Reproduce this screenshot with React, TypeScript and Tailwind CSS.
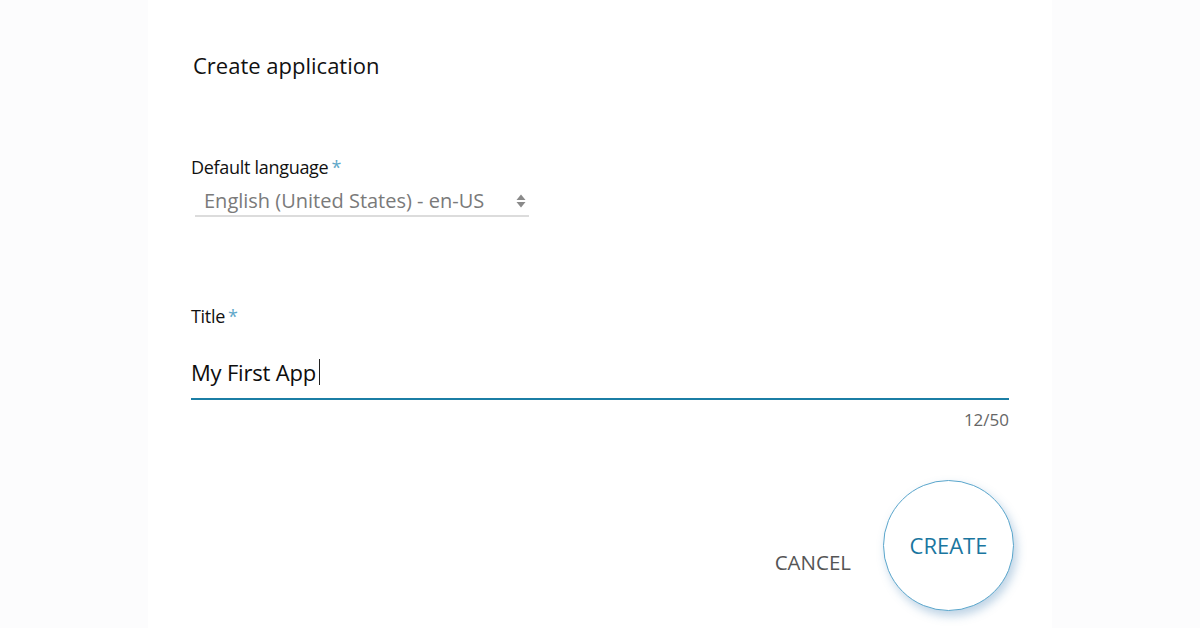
import React from "react";

const font = { fontFamily: '"Open Sans", "Noto Sans", Arial, sans-serif' };

function Asterisk() {
  return <span className="ml-[3px] text-[#5fa8c9]">*</span>;
}

export default function App() {
  return (
    <div className="flex h-[628px] w-[1200px] justify-center bg-[#fcfcfd]" style={font}>
      <div className="flex w-[904px] flex-col bg-white px-[43px]">
        <h1 className="ml-[2px] mt-[50px] text-[22px] leading-[30px] text-[#111]">Create application</h1>

        <div className="mt-[74px] flex flex-col">
          <label className="text-[18px] leading-[26px] tracking-[-0.3px] text-[#111]">
            Default language
            <Asterisk />
          </label>
          <div className="ml-[4px] mt-[8px] flex w-[334px] items-center justify-between border-b-2 border-[#dcdcdc] pb-[1px] pl-[9px] pr-[2px]">
            <span className="text-[20px] leading-[26px] text-[#7a7a7a]">English (United States) - en-US</span>
            <svg width="12" height="18" viewBox="0 0 12 18" className="text-[#8a8a8a]">
              <path d="M6 2.5 L10.5 8 H1.5 Z" fill="currentColor" />
              <path d="M6 15.5 L10.5 10 H1.5 Z" fill="currentColor" />
            </svg>
          </div>
        </div>

        <div className="mt-[86px] flex flex-col">
          <label className="text-[18px] leading-[26px] tracking-[-0.3px] text-[#111]">
            Title
            <Asterisk />
          </label>
          <div className="mt-[28px] flex items-center border-b-2 border-[#1b7ea5] pb-[11px]">
            <span className="text-[22px] leading-[30px] tracking-[-0.2px] text-[#0d0d0d]">My First App</span>
            <span className="ml-[3px] h-[26px] w-[1px] bg-[#222]" />
          </div>
          <div className="mt-[8px] text-right text-[17px] leading-[24px] text-[#666]">12/50</div>
        </div>

        <div className="-mr-[5px] mt-[48px] flex items-start justify-end">
          <button className="mr-[32px] mt-[68px] text-[20.5px] leading-[28px] text-[#555]">CANCEL</button>
          <button className="flex h-[131px] w-[131px] items-center justify-center rounded-full border border-[#5aa6cc] bg-white text-[22px] text-[#1a76a0] shadow-[3px_5px_10px_rgba(70,130,180,0.35)]">
            CREATE
          </button>
        </div>
      </div>
    </div>
  );
}
